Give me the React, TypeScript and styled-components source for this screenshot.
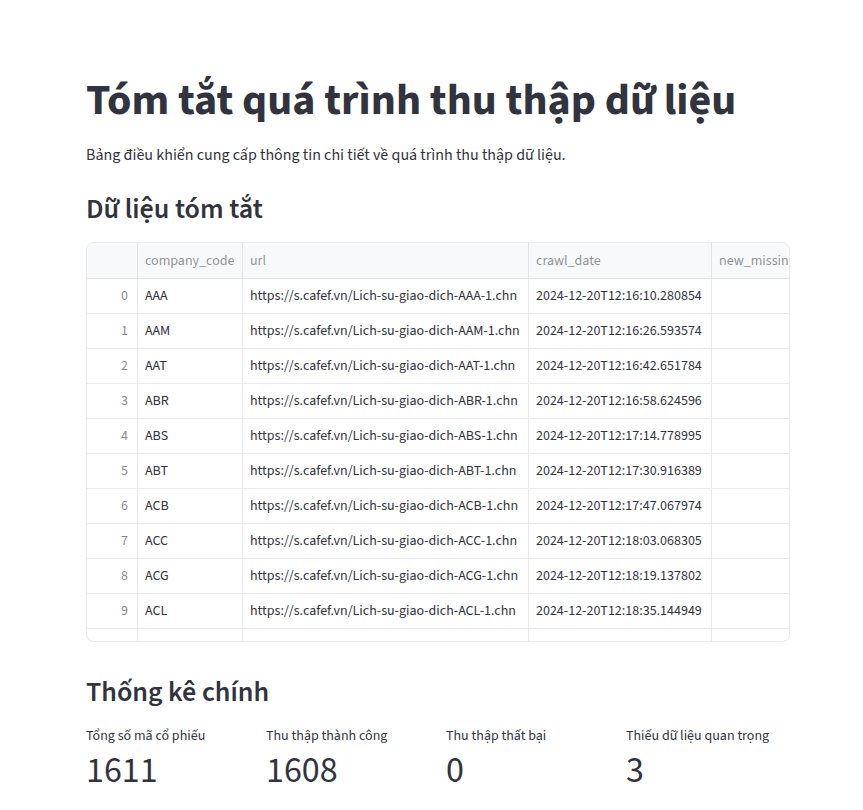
import React from "react";
import styled, { createGlobalStyle } from "styled-components";

const GlobalStyle = createGlobalStyle`
  html, body {
    margin: 0;
    padding: 0;
    background: #ffffff;
  }
  body {
    font-family: "Source Sans 3", "Source Sans Pro", "Noto Sans", sans-serif;
    color: rgb(49, 51, 63);
    -webkit-font-smoothing: antialiased;
  }
`;

const Page = styled.main`
  width: 704px;
  padding: 75px 0 0 86px;
  display: flex;
  flex-direction: column;
`;

const Title = styled.h1`
  margin: 0;
  font-size: 44px;
  font-weight: 700;
  line-height: 1.2;
  color: rgb(49, 51, 63);
`;

const Lead = styled.p`
  margin: 15px 0 0;
  font-size: 16px;
  line-height: 1.6;
`;

const Heading = styled.h3<{ $top: number }>`
  margin: ${(p) => p.$top}px 0 0;
  font-size: 28px;
  font-weight: 600;
  line-height: 1.2;
  color: rgb(49, 51, 63);
`;

const GridFrame = styled.div`
  margin-top: 15px;
  height: 400px;
  box-sizing: border-box;
  border: 1px solid rgba(49, 51, 63, 0.1);
  border-radius: 8px;
  overflow: hidden;
`;

const Table = styled.table`
  border-collapse: separate;
  border-spacing: 0;
  table-layout: fixed;
  width: 825px;
  font-size: 14px;
`;

const HeadCell = styled.th<{ $w: number }>`
  width: ${(p) => p.$w}px;
  height: 36px;
  box-sizing: border-box;
  padding: 2px 7px 0;
  text-align: left;
  font-weight: 400;
  color: rgba(49, 51, 63, 0.55);
  background: #f8f9fb;
  border-right: 1px solid rgba(49, 51, 63, 0.1);
  border-bottom: 1px solid rgba(49, 51, 63, 0.1);
  white-space: nowrap;
  overflow: hidden;
`;

const Cell = styled.td<{ $index?: boolean }>`
  height: 35px;
  box-sizing: border-box;
  padding: 1px ${(p) => (p.$index ? "9px" : "7px")} 0 7px;
  text-align: ${(p) => (p.$index ? "right" : "left")};
  color: ${(p) => (p.$index ? "rgba(49, 51, 63, 0.6)" : "rgb(49, 51, 63)")};
  border-right: 1px solid rgba(49, 51, 63, 0.1);
  border-bottom: 1px solid rgba(49, 51, 63, 0.1);
  white-space: nowrap;
  overflow: hidden;
`;

const Metrics = styled.div`
  margin-top: 15px;
  display: grid;
  grid-template-columns: repeat(4, 1fr);
  column-gap: 16px;
`;

const Metric = styled.div`
  display: flex;
  flex-direction: column;
`;

const MetricLabel = styled.div`
  font-size: 14px;
  line-height: 1.6;
  color: rgb(49, 51, 63);
`;

const MetricValue = styled.div`
  margin-top: 2px;
  font-size: 36px;
  line-height: 1.2;
  color: rgb(49, 51, 63);
`;

const columns: [string, number][] = [
  ["", 51],
  ["company_code", 105],
  ["url", 286],
  ["crawl_date", 183],
  ["new_missin", 200],
];

const rows: [string, string][] = [
  ["AAA", "2024-12-20T12:16:10.280854"],
  ["AAM", "2024-12-20T12:16:26.593574"],
  ["AAT", "2024-12-20T12:16:42.651784"],
  ["ABR", "2024-12-20T12:16:58.624596"],
  ["ABS", "2024-12-20T12:17:14.778995"],
  ["ABT", "2024-12-20T12:17:30.916389"],
  ["ACB", "2024-12-20T12:17:47.067974"],
  ["ACC", "2024-12-20T12:18:03.068305"],
  ["ACG", "2024-12-20T12:18:19.137802"],
  ["ACL", "2024-12-20T12:18:35.144949"],
];

const metrics: [string, string][] = [
  ["Tổng số mã cổ phiếu", "1611"],
  ["Thu thập thành công", "1608"],
  ["Thu thập thất bại", "0"],
  ["Thiếu dữ liệu quan trọng", "3"],
];

export default function App() {
  return (
    <>
      <GlobalStyle />
      <Page>
        <Title>Tóm tắt quá trình thu thập dữ liệu</Title>
        <Lead>Bảng điều khiển cung cấp thông tin chi tiết về quá trình thu thập dữ liệu.</Lead>
        <Heading $top={25}>Dữ liệu tóm tắt</Heading>
        <GridFrame>
          <Table>
            <thead>
              <tr>
                {columns.map(([name, w]) => (
                  <HeadCell key={name || "idx"} $w={w}>
                    {name}
                  </HeadCell>
                ))}
              </tr>
            </thead>
            <tbody>
              {rows.map(([code, date], i) => (
                <tr key={code}>
                  <Cell $index>{i}</Cell>
                  <Cell>{code}</Cell>
                  <Cell>{`https://s.cafef.vn/Lich-su-giao-dich-${code}-1.chn`}</Cell>
                  <Cell>{date}</Cell>
                  <Cell />
                </tr>
              ))}
              <tr>
                <Cell $index />
                <Cell />
                <Cell />
                <Cell />
                <Cell />
              </tr>
            </tbody>
          </Table>
        </GridFrame>
        <Heading $top={34}>Thống kê chính</Heading>
        <Metrics>
          {metrics.map(([label, value]) => (
            <Metric key={label}>
              <MetricLabel>{label}</MetricLabel>
              <MetricValue>{value}</MetricValue>
            </Metric>
          ))}
        </Metrics>
      </Page>
    </>
  );
}
